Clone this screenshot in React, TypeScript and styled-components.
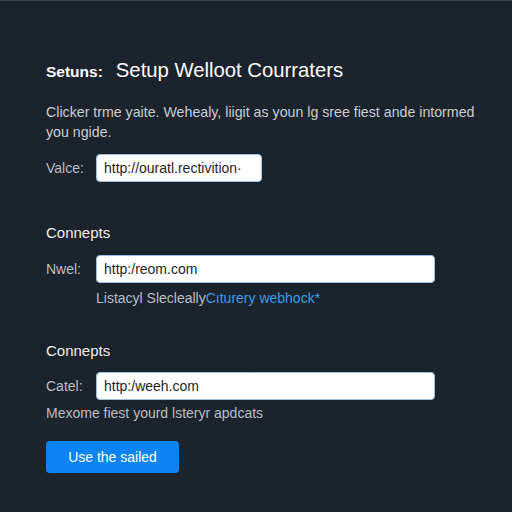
import React from "react";
import styled, { createGlobalStyle } from "styled-components";

const GlobalStyle = createGlobalStyle`
  html, body {
    margin: 0;
    padding: 0;
    background: #1b232c;
  }
  body {
    font-family: "Liberation Sans", Arial, sans-serif;
  }
`;

const Frame = styled.div`
  min-height: 512px;
  box-sizing: border-box;
  border-top: 1px solid #3a424b;
  background: linear-gradient(180deg, #1b232c 0%, #1a222b 60%, #1c242d 100%);
  padding: 55px 28px 0 46px;
  display: flex;
  flex-direction: column;
`;

const TitleRow = styled.div`
  display: flex;
  align-items: baseline;
  gap: 13px;
  line-height: 28px;
  color: #ffffff;
`;

const TitleLabel = styled.span`
  font-weight: 700;
  font-size: 15.5px;
`;

const TitleText = styled.span`
  font-size: 20.3px;
  font-weight: 400;
`;

const Paragraph = styled.p`
  margin: 16px 0 0 0;
  font-size: 14.2px;
  line-height: 20px;
  color: #c9cdd2;
`;

const FieldRow = styled.div<{ $top: number }>`
  display: flex;
  align-items: center;
  margin-top: ${(p) => p.$top}px;
`;

const FieldLabel = styled.span`
  width: 50px;
  font-size: 14px;
  color: #b9bec4;
`;

const Input = styled.input<{ $width: number }>`
  box-sizing: border-box;
  width: ${(p) => p.$width}px;
  height: 28px;
  border: 1px solid #9fc0e6;
  border-radius: 4px;
  background: #ffffff;
  padding: 0 7px;
  font-family: inherit;
  font-size: 14px;
  color: #1f242a;
  outline: none;
`;

const SectionHeading = styled.h3<{ $top: number }>`
  margin: ${(p) => p.$top}px 0 0 0;
  font-size: 15px;
  font-weight: 400;
  line-height: 20px;
  color: #eef0f2;
`;

const Helper = styled.div<{ $top: number; $indent?: boolean }>`
  margin-top: ${(p) => p.$top}px;
  padding-left: ${(p) => (p.$indent ? 50 : 0)}px;
  font-size: 14px;
  line-height: 18px;
  color: #b9bec4;
`;

const LinkText = styled.a`
  color: #3c9be9;
  text-decoration: none;
`;

const Button = styled.button`
  align-self: flex-start;
  margin-top: 19px;
  width: 133px;
  height: 32px;
  border: none;
  border-radius: 4px;
  background: #0a84f4;
  color: #ffffff;
  font-family: inherit;
  font-size: 14px;
  font-weight: 400;
  cursor: pointer;
`;

export default function App() {
  return (
    <>
      <GlobalStyle />
      <Frame>
        <TitleRow>
          <TitleLabel>Setuns:</TitleLabel>
          <TitleText>Setup Welloot Courraters</TitleText>
        </TitleRow>
        <Paragraph>
          Clicker trme yaite. Wehealy, liigit as youn lg sree fiest ande intormed you ngide.
        </Paragraph>
        <FieldRow $top={12}>
          <FieldLabel>Valce:</FieldLabel>
          <Input $width={166} defaultValue="http://ouratl.rectivition·" />
        </FieldRow>

        <SectionHeading $top={41}>Connepts</SectionHeading>
        <FieldRow $top={12}>
          <FieldLabel>Nwel:</FieldLabel>
          <Input $width={339} defaultValue="http:/reom.com" />
        </FieldRow>
        <Helper $top={6} $indent>
          Listacyl Slecleally<LinkText href="#">Cıturery webhock*</LinkText>
        </Helper>

        <SectionHeading $top={34}>Connepts</SectionHeading>
        <FieldRow $top={11}>
          <FieldLabel>Catel:</FieldLabel>
          <Input $width={339} defaultValue="http:/weeh.com" />
        </FieldRow>
        <Helper $top={4}>Mexome fiest yourd lsteryr apdcats</Helper>

        <Button>Use the sailed</Button>
      </Frame>
    </>
  );
}
